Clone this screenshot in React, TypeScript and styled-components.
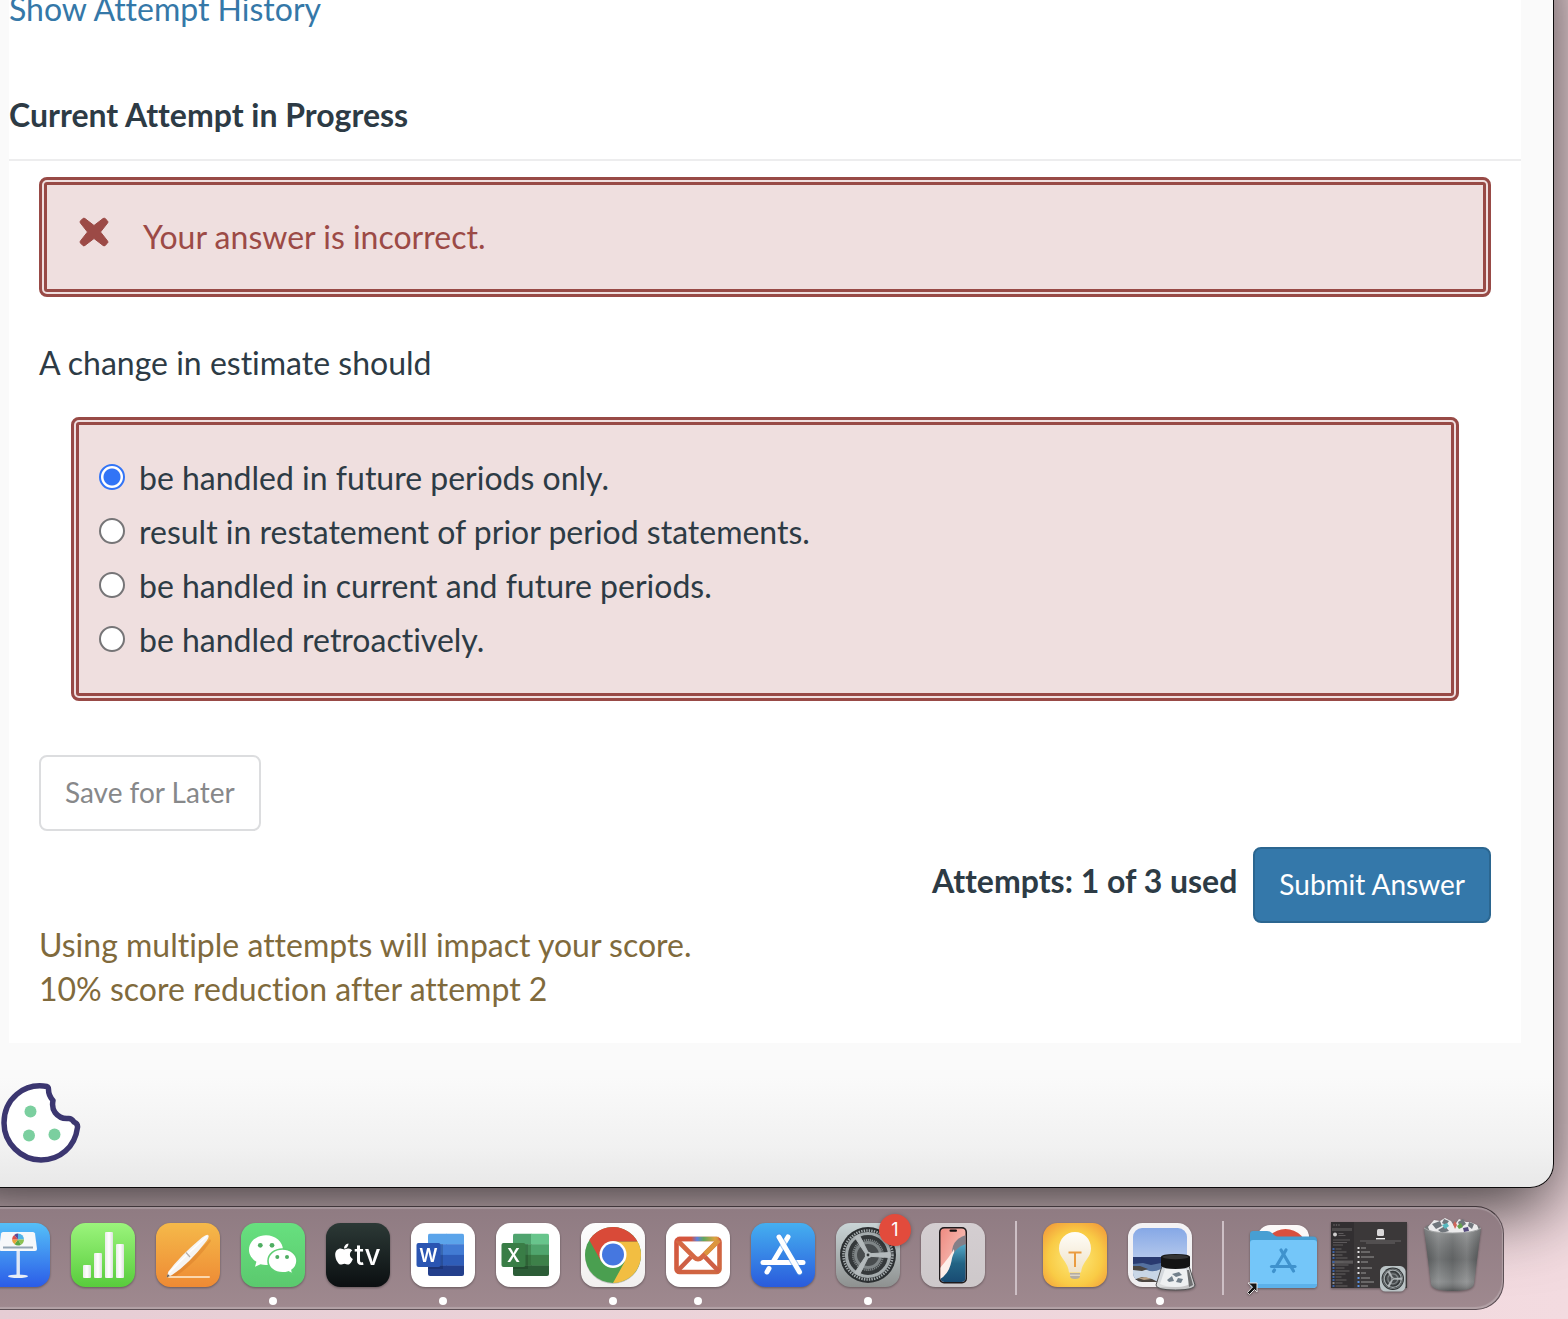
import React, { useState } from 'react';
import styled, { createGlobalStyle } from 'styled-components';
import { FaApple } from 'react-icons/fa';

const GlobalStyle = createGlobalStyle`
  *, *::before, *::after { box-sizing: border-box; }
  body {
    margin: 0;
    background: #f1d8de;
    color: #2d3b45;
    font-family: Lato, "Liberation Sans", sans-serif;
    font-size: 32px;
    line-height: 44px;
    font-variant-ligatures: none;
  }
  button, input { font: inherit; margin: 0; }
`;

/* ---------- Desktop and browser window ---------- */

const Desktop = styled.div`
  min-height: 100vh;
  overflow: hidden;
  display: flex;
  flex-direction: column;
  background: linear-gradient(to right, #e6cdd4, #f3dbe0);
`;

/* The window runs past the top and left screen edges, so its shadow is even there. */
const BrowserWindow = styled.div`
  margin: -73px 14px 0 -60px;
  padding: 60px 0 0 60px;
  overflow: hidden;
  border: solid #0c0a0b;
  border-width: 0 1px 1px 0;
  border-bottom-right-radius: 24px;
  background: linear-gradient(to top, #e8e8e8 0, #f1f1f1 40px, #fafafa 110px);
  box-shadow: 0 22px 72px rgba(0, 0, 0, 0.74);
`;

const Sheet = styled.main`
  margin: 0 32px 0 9px;
  padding-bottom: 32px;
  background: #fff;
`;

const HistoryLink = styled.a`
  display: inline-block;
  color: #3578a8;
  text-decoration: none;
`;

const Heading = styled.h1`
  margin: 62px 0 0;
  padding-bottom: 22px;
  border-bottom: 2px solid #ededee;
  font-size: 32px;
  line-height: 44px;
  font-weight: 700;
`;

const SheetBody = styled.div`
  padding: 16px 30px 0;
`;

const Alert = styled.div`
  display: flex;
  gap: 34px;
  padding: 30px 32px;
  border: 8px double #984a46;
  border-radius: 8px;
  background: #efdfdf;
  color: #9c4a46;
`;

const CrossIcon = styled.svg`
  width: 30px;
  height: 30px;
  margin-top: 2px;
  fill: currentColor;
`;

const Question = styled.form`
  display: flex;
  flex-direction: column;
`;

const Prompt = styled.p`
  margin: 44px 0 32px;
`;

const Options = styled.fieldset`
  display: flex;
  flex-direction: column;
  gap: 10px;
  min-width: 0;
  margin: 0 32px;
  padding: 31px 20px;
  border: 8px double #984a46;
  border-radius: 8px;
  background: #efdfdf;
`;

const Option = styled.label`
  display: flex;
  align-items: flex-start;
  gap: 14px;
`;

const Radio = styled.input`
  appearance: none;
  flex: none;
  width: 26px;
  height: 26px;
  border: 2px solid #767577;
  border-radius: 50%;
  background: #fff;

  ${Option} > & {
    margin-top: 8px;
  }

  &:checked {
    border-color: #3274f6;
    background: radial-gradient(circle, #3274f6 0 8px, #fff 9px);
  }
`;

const Button = styled.button<{ $primary?: boolean }>`
  padding: 15px 24px 17px;
  border: 2px solid ${(p) => (p.$primary ? '#2b6690' : '#dcdddf')};
  border-radius: 8px;
  background: ${(p) => (p.$primary ? '#3478aa' : '#fff')};
  color: ${(p) => (p.$primary ? '#fff' : '#87888a')};
  font-size: 28px;
  line-height: 40px;
`;

const SaveRow = styled.div`
  margin-top: 54px;
`;

const SubmitRow = styled.div`
  display: flex;
  justify-content: flex-end;
  align-items: flex-start;
  gap: 16px;
  margin-top: 16px;
`;

const Attempts = styled.strong`
  padding-top: 12px;
`;

const Notice = styled.p`
  margin: 0;
  color: #806a3c;
`;

const NoticeLine = styled.span`
  display: block;
`;

const CookieButton = styled.button`
  display: block;
  margin: 39px 0 23px;
  padding: 0;
  border: 0;
  background: none;
`;

const CookieIcon = styled.svg`
  display: block;
  width: 82px;
  height: 82px;
`;

/* ---------- Dock ---------- */

const DockBar = styled.nav`
  display: flex;
  gap: 21px;
  width: fit-content;
  margin: 18px 0 10px -31px;
  padding: 16px 19px 4px 16px;
  border: 1px solid #5d5056;
  border-top-color: #3f363a;
  border-radius: 28px;
  background: linear-gradient(#8f7b82, #9f898f);
  box-shadow: inset 0 2px 1px rgba(255, 255, 255, 0.2), inset -1px -2px 1px rgba(255, 255, 255, 0.22);
`;

const DockItem = styled.button<{ $running?: boolean }>`
  position: relative;
  display: flex;
  flex-direction: column;
  align-items: center;
  gap: 10px;
  width: 64px;
  padding: 0;
  border: 0;
  background: none;

  &::after {
    content: '';
    width: 8px;
    height: 8px;
    border-radius: 50%;
    background: ${(p) => (p.$running ? '#fff' : 'transparent')};
  }
`;

const DockSeparator = styled.span`
  width: 2px;
  height: 74px;
  margin: -2px 5px 0 9px;
  background: #cdbfc5;
`;

const Badge = styled.span`
  position: absolute;
  top: -9px;
  right: -11px;
  width: 32px;
  border-radius: 50%;
  background: #e24b3c;
  box-shadow: 0 1px 4px rgba(0, 0, 0, 0.3);
  color: #fff;
  font-family: Inter, sans-serif;
  font-size: 18px;
  line-height: 32px;
  text-align: center;
`;

const Art = styled.svg`
  display: block;
  width: 64px;
  height: 64px;
  overflow: visible;
  filter: drop-shadow(0 1px 1px rgba(0, 0, 0, 0.35));
`;

const LetterMark = styled.text`
  font-family: Inter, sans-serif;
  font-weight: 600;
  fill: #fff;
`;

const TvMark = styled(LetterMark)`
  font-weight: 500;
`;

function Tile({ id, from, to }: { id: string; from: string; to: string }) {
  return (
    <>
      <defs>
        <linearGradient id={id} x1="0" y1="0" x2="0" y2="1">
          <stop offset="0" stopColor={from} />
          <stop offset="1" stopColor={to} />
        </linearGradient>
      </defs>
      <rect width="64" height="64" rx="14.5" fill={`url(#${id})`} />
    </>
  );
}

function Keynote() {
  return (
    <Art viewBox="0 0 64 64">
      <Tile id="kn" from="#55c0f8" to="#2b5ce8" />
      <rect x="30.5" y="28" width="3.4" height="25" fill="#dfe8f5" />
      <ellipse cx="32" cy="53.3" rx="10" ry="1.8" fill="#e8edf6" />
      <path d="M17 9h30q1.500 0 2 1.500l2 15.500q0 2-2 2H15q-2 0-2-2l2-15.500q.4-1.500 2-1.500z" fill="#f6f8fa" />
      <rect x="17" y="23.500" width="30" height="2" fill="#93a5b5" />
      <path d="M32 16.500V10.500a6 6 0 0 1 6 6z" fill="#50b4e8" />
      <path d="M32 16.500h6a6 6 0 0 1-3 5.200z" fill="#8cc152" />
      <path d="M32 16.500l3 5.200a6 6 0 0 1-6.500-.4z" fill="#5ba843" />
      <path d="M32 16.500l-3.500 4.800a6 6 0 0 1-2.500-4.800z" fill="#e8a33c" />
      <path d="M32 16.500h-6a6 6 0 0 1 2.200-4.600z" fill="#dd4f48" />
      <path d="M32 16.500l-3.800-4.600a6 6 0 0 1 3.800-1.400z" fill="#5c4a98" />
    </Art>
  );
}

function Numbers() {
  return (
    <Art viewBox="0 0 64 64">
      <Tile id="nb" from="#9bf47c" to="#58cc3c" />
      <defs>
        <linearGradient id="nb-bar">
          <stop offset="0" stopColor="#e9ece9" />
          <stop offset=".5" stopColor="#fff" />
          <stop offset="1" stopColor="#dde2dd" />
        </linearGradient>
      </defs>
      <g fill="url(#nb-bar)">
        <rect x="12" y="42" width="8" height="13" rx="1" />
        <rect x="23" y="30" width="8" height="25" rx="1" />
        <rect x="34" y="9" width="8" height="46" rx="1" />
        <rect x="45" y="21" width="8" height="34" rx="1" />
      </g>
    </Art>
  );
}

function Pages() {
  return (
    <Art viewBox="0 0 64 64">
      <Tile id="pg" from="#f5b94a" to="#ee8a34" />
      <rect x="12" y="53" width="42" height="2" rx="1" fill="#fbd7ae" />
      <path d="M15 53Q34 38 54 16l1 2Q40 40 20 53z" fill="#c96a1e" opacity=".3" />
      <path d="M10.500 54.500l2-6Q24 33 46 14.500q4.500-3.200 6-2.500 1.800 1.500-1.500 6Q33 41 16 52z" fill="#f6f4f2" />
      <path d="M13 50Q30 32 51 13" fill="none" stroke="#fff" strokeWidth="1.500" />
      <path d="M30 29.500l4 4.500" stroke="#b3aeab" strokeWidth="1.200" />
      <path d="M10.500 54.500l1.200-3.400 2.200 2z" fill="#6b635c" />
    </Art>
  );
}

function WeChat() {
  return (
    <Art viewBox="0 0 64 64">
      <Tile id="wc" from="#67e07f" to="#5bc96e" />
      <path d="M25 12.200c9.500 0 17 6.500 17 14.800s-7.500 15-17 15q-2.800 0-5.500-.8L14 43.800l1.400-5C11 36 8 31.800 8 27c0-8.300 7.500-14.800 17-14.800z" fill="#fff" />
      <path d="M41.500 26c8 0 14.500 5.200 14.500 12 0 3.800-2 7-5 9.200l.9 4-4.500-2.300q-2.700 1-5.900 1C33.500 49.900 27 44.700 27 38s6.500-12 14.500-12z" fill="#fff" stroke="#5fd074" strokeWidth="1.600" />
      <g fill="#4fae62">
        <circle cx="19.300" cy="22.300" r="2.400" />
        <circle cx="31" cy="22.300" r="2.400" />
        <circle cx="36.300" cy="34" r="2" />
        <circle cx="46" cy="34" r="2" />
      </g>
    </Art>
  );
}

function AppleTv() {
  return (
    <Art viewBox="0 0 64 64">
      <Tile id="tv" from="#2c3936" to="#0b0f11" />
      <FaApple x="6" y="19" size={24} color="#fff" />
      <TvMark x="28.500" y="42" fontSize="28">tv</TvMark>
    </Art>
  );
}

function Office({ id, letter, label, cells }: { id: string; letter: string; label: string; cells: string[] }) {
  return (
    <Art viewBox="0 0 64 64">
      <Tile id={id} from="#fff" to="#fff" />
      <clipPath id={`${id}-c`}>
        <rect x="17" y="10.500" width="36" height="42.500" rx="2" />
      </clipPath>
      <g clipPath={`url(#${id}-c)`}>
        {cells.map((fill, i) => (
          <rect key={i} x={i % 2 ? 35 : 17} y={10.5 + Math.floor(i / 2) * 10.7} width="18.500" height="11" fill={fill} />
        ))}
        <rect x="17" y="21" width="15" height="25" fill="#000" opacity=".15" />
      </g>
      <rect x="5.500" y="20" width="24" height="24" rx="2" fill={label} />
      <LetterMark x="17.500" y="38.500" fontSize="18" textAnchor="middle">{letter}</LetterMark>
    </Art>
  );
}

function Chrome() {
  return (
    <Art viewBox="0 0 64 64">
      <Tile id="cr" from="#fdfdfd" to="#f1efee" />
      <circle cx="32" cy="33" r="28" fill="#000" opacity=".18" />
      <circle cx="32" cy="32" r="28" fill="#4a9f50" />
      <path d="M32 18.500h24.500A28 28 0 0 1 32 60L43.700 38.800z" fill="#f2be42" />
      <path d="M8.300 17.100A28 28 0 0 1 56.500 18.500H32L20.300 38.800z" fill="#d94a38" />
      <circle cx="32" cy="31.500" r="13.500" fill="#fff" />
      <circle cx="32" cy="31.500" r="11" fill="#4577e0" />
    </Art>
  );
}

function Mail() {
  return (
    <Art viewBox="0 0 64 64">
      <Tile id="ml" from="#fff" to="#fff" />
      <defs>
        <linearGradient id="ml-s" gradientUnits="userSpaceOnUse" x1="8" y1="0" x2="56" y2="0">
          <stop offset="0" stopColor="#d4553e" />
          <stop offset=".36" stopColor="#d4553e" />
          <stop offset=".48" stopColor="#5d7fe0" />
          <stop offset=".62" stopColor="#61a85c" />
          <stop offset=".85" stopColor="#dba33f" />
          <stop offset="1" stopColor="#d9743d" />
        </linearGradient>
        <linearGradient id="ml-b" x1="0" y1="0" x2="1" y2="1">
          <stop offset="0" stopColor="#d4553e" />
          <stop offset="1" stopColor="#cf6a42" />
        </linearGradient>
      </defs>
      <g fill="none" strokeWidth="4.600" strokeLinejoin="round">
        <rect x="10.500" y="16" width="43" height="33" rx="3" stroke="url(#ml-b)" />
        <path d="M11 17l17.500 17.500q3.500 3.500 7 0L53 17" stroke="#d56844" />
        <path d="M11 48.500L25 34M53 48.500L39 34" stroke="#ce5f45" />
        <path d="M39 31L53 17" stroke="#dc963f" />
        <path d="M11.500 16H52.500" stroke="url(#ml-s)" />
      </g>
    </Art>
  );
}

function AppStore() {
  return (
    <Art viewBox="0 0 64 64">
      <Tile id="as" from="#45aff0" to="#2a5bdc" />
      <g stroke="#fff" strokeWidth="5" strokeLinecap="round">
        <path d="M37 14L22 39" />
        <path d="M12 39.500H52" />
        <path d="M18 45.500L16 49" />
        <path d="M28 14L48.500 49" stroke="#3f8be6" strokeWidth="7" opacity=".5" />
        <path d="M28 14L48.500 49" />
      </g>
    </Art>
  );
}

function GearFace() {
  const spokes = [0, 120, 240];
  return (
    <g>
      <circle cx="32" cy="32" r="28" fill="#2b2f31" />
      <circle cx="32" cy="32" r="24.500" fill="none" stroke="#a4abad" strokeWidth="2.600" strokeDasharray="1.400 1.166" />
      <circle cx="32" cy="32" r="21.500" fill="#34383a" stroke="#a4abad" strokeWidth="3.200" />
      <circle cx="32" cy="32" r="12.500" fill="#484c4e" stroke="#7f8587" strokeWidth="3" />
      <circle cx="32" cy="32" r="15" fill="none" stroke="#7f8587" strokeWidth="2" strokeDasharray="1.200 .8" />
      {spokes.map((a) => (
        <path key={a} d="M32 30.800L54 29.500V34.500L32 33.200z" fill="#b4babc" stroke="#b4babc" transform={`rotate(${a} 32 32)`} />
      ))}
      <circle cx="32" cy="32" r="3.200" fill="#b4babc" />
      <circle cx="32" cy="32" r="1.400" fill="#34383a" />
    </g>
  );
}

function Settings() {
  return (
    <Art viewBox="0 0 64 64">
      <Tile id="st" from="#c9d4d6" to="#8e9190" />
      <GearFace />
    </Art>
  );
}

function PhoneMirror() {
  return (
    <Art viewBox="0 0 64 64">
      <Tile id="ph" from="#d4ced1" to="#cdc8ca" />
      <defs>
        <linearGradient id="ph-r" x1="0" y1="0" x2="1" y2="1">
          <stop offset="0" stopColor="#ee8a80" />
          <stop offset="1" stopColor="#fbd6cf" />
        </linearGradient>
        <linearGradient id="ph-b" x1="0" y1="0" x2="0" y2="1">
          <stop offset="0" stopColor="#56aac8" />
          <stop offset=".5" stopColor="#226384" />
          <stop offset="1" stopColor="#184a72" />
        </linearGradient>
        <clipPath id="ph-c">
          <rect x="19.500" y="5.500" width="25" height="53.500" rx="4" />
        </clipPath>
      </defs>
      <rect x="18" y="4" width="28" height="56.500" rx="5" fill="#1e1a1c" />
      <g clipPath="url(#ph-c)">
        <rect x="19" y="5" width="26" height="55" fill="url(#ph-r)" />
        <path d="M45 12Q29 17 31.500 33L45 26z" fill="#847f88" />
        <path d="M19 56V45Q30 32 33 26L34 42L24 60z" fill="#fdeeea" />
        <path d="M45 21Q32 25 30.500 38 28 51 19 56V60H45z" fill="url(#ph-b)" />
      </g>
      <rect x="28.500" y="6.500" width="7.500" height="2.300" rx="1.100" fill="#151213" />
    </Art>
  );
}

function Tips() {
  return (
    <Art viewBox="0 0 64 64">
      <defs>
        <radialGradient id="tp" cx=".5" cy=".55" r=".7">
          <stop offset="0" stopColor="#fdea7a" />
          <stop offset=".6" stopColor="#f9cb45" />
          <stop offset="1" stopColor="#f0963a" />
        </radialGradient>
        <linearGradient id="tp-b" x1="0" y1="0" x2="0" y2="1">
          <stop offset="0" stopColor="#fffdf8" />
          <stop offset="1" stopColor="#efe2c8" />
        </linearGradient>
      </defs>
      <rect width="64" height="64" rx="14.500" fill="url(#tp)" />
      <path d="M26 49.500Q25.500 43 20 36 16 31 16 25.500C16 16 23 9 32 9S48 16 48 25.500Q48 31 44 36 38.500 43 38 49.500z" fill="url(#tp-b)" />
      <path d="M27 50h10v3q0 3-5 3t-5-3z" fill="#b5ada0" />
      <path d="M27 52.200h10" stroke="#efe8da" />
      <path d="M25.500 29.500H38.500M32 29.500V44" stroke="#ea9c40" strokeWidth="2" fill="none" />
    </Art>
  );
}

function PreviewApp() {
  return (
    <Art viewBox="0 0 64 64">
      <Tile id="pv" from="#f4f3f5" to="#efedef" />
      <defs>
        <clipPath id="pv-c">
          <rect x="5" y="5" width="54" height="54" rx="9" />
        </clipPath>
        <linearGradient id="pv-s" x1="0" y1="0" x2="0" y2="1">
          <stop offset="0" stopColor="#86a8e6" />
          <stop offset="1" stopColor="#b3c7ec" />
        </linearGradient>
      </defs>
      <g clipPath="url(#pv-c)">
        <rect x="5" y="5" width="54" height="30" fill="url(#pv-s)" />
        <rect x="5" y="34" width="54" height="12" fill="#293a70" />
        <path d="M5 41l10-1 8 2 10-2 12 1 14-1V60H5z" fill="#55719f" />
        <path d="M5 47q8-3 14 0t14-1 26 0v14H5z" fill="#c9d6e6" />
        <path d="M5 43l7 0 8 3-6 2-9-1zM5 60v-3l9-3 10 2 8 4z" fill="#4c4641" />
        <path d="M10 55l8-1 5 2-7 1z" fill="#b89f84" />
      </g>
      <path d="M34 43L28 62q0 5 19.500 5T67 62L61 43z" fill="#d7d9da" fillOpacity=".85" stroke="#4e4f50" strokeWidth="1" />
      <path d="M37 46L32 61q6 3 15.500 3T62 61L58 46z" fill="#eef0f1" />
      <path d="M44 51l7-2 3 3-6 2zM39 57l5-4 2 5-5 1zM50 55l5 1-2 4-5-1z" fill="#73808b" />
      <path d="M61 47l4 15-4 2-2-17z" fill="#6d6f70" />
      <path d="M33 34q0-3 14.500-3T62 34v9q-3 3-14.500 3T33 43z" fill="#141414" />
      <ellipse cx="47.500" cy="34" rx="13" ry="2.200" fill="#343434" />
    </Art>
  );
}

function AppsFolder() {
  return (
    <Art viewBox="0 0 64 64">
      <defs>
        <clipPath id="fd-c">
          <rect x="8" y="2" width="51" height="30" rx="12" />
        </clipPath>
      </defs>
      <rect x="8" y="2" width="51" height="30" rx="12" fill="#fbf8f8" />
      <circle cx="35.500" cy="28" r="22" fill="#d9503f" clipPath="url(#fd-c)" />
      <path d="M0 11q0-3 3-3h14q3 0 5 2l2 2q2 1.500 4 1.500h35q4 0 4 4V30H0z" fill="#479fd3" />
      <path d="M0 20q0-3 3-3h61q3 0 3 3v41q0 4-4 4H4q-4 0-4-4z" fill="#74c6f9" />
      <path d="M0 61h67q0 4-4 4H4q-4 0-4-4z" fill="#5cb1ea" />
      <g stroke="#3f92cd" strokeWidth="3.200" strokeLinecap="round">
        <path d="M36 27L26.500 43" />
        <path d="M21.500 43.500H45" />
        <path d="M24.500 47L23.500 48.500" />
        <path d="M31 27L43.500 48" />
      </g>
      <path d="M-2 60H7v9l-2.500-2.500L-.5 71.500-2.500 69.500 2.500 64z" fill="#141414" stroke="#e8e4e5" strokeWidth="1" />
    </Art>
  );
}

function WindowThumb() {
  const sideRows = [26, 29, 32, 35, 39, 42, 45, 48, 51, 54, 57, 60, 63];
  const mainRows = [25, 29, 34, 39, 45, 50, 55, 59, 63];
  return (
    <Art viewBox="0 0 64 64">
      <rect x="-4" y="-1" width="76" height="66" fill="#3b3839" />
      <rect x="-4" y="-1" width="23" height="66" fill="#322f31" />
      <g fill="#6c696a">
        <circle cx="-1" cy="2" r=".8" />
        <circle cx="1.500" cy="2" r=".8" />
        <circle cx="4" cy="2" r=".8" />
      </g>
      <rect x="-3" y="5" width="20" height="3" fill="#4d4a4b" />
      <circle cx="0" cy="11.500" r="2" fill="#cfcdcd" />
      <path d="M3.500 10.500h5M3.500 12.500h7M-2 17h17M-2 19.500h14M-2 22h10" stroke="#686566" strokeWidth=".8" />
      <rect x="-3" y="37.500" width="21" height="3.200" fill="#5b5859" />
      {sideRows.map((y, i) => (
        <g key={y}>
          <rect x="-2.500" y={y - 1} width="2" height="2" fill={i % 3 === 2 ? '#8a8788' : '#3a62a8'} />
          <rect x="0.500" y={y - 0.5} width={6 + ((i * 5) % 9)} height="1" fill="#656263" />
        </g>
      ))}
      <rect x="42" y="6" width="7" height="7" rx="1.500" fill="#d9d7d8" />
      <rect x="41" y="15" width="9" height="1.400" fill="#efefef" />
      <path d="M25 18h41M31 20h29" stroke="#777475" strokeWidth=".8" />
      {mainRows.map((y, i) => (
        <g key={y}>
          <rect x="22.500" y={y - 1} width="2" height="2" fill={i > 5 ? '#5a8fe0' : '#e4e2e3'} />
          <rect x="26" y={y - 0.5} width={5 + ((i * 4) % 10)} height="1" fill="#979596" />
        </g>
      ))}
      <g transform="translate(45 43) scale(.4)">
        <rect width="64" height="64" rx="14" fill="#bac3c5" />
        <GearFace />
      </g>
    </Art>
  );
}

function Trash() {
  return (
    <Art viewBox="0 0 64 64">
      <defs>
        <linearGradient id="tr">
          <stop offset="0" stopColor="#5b5e5f" />
          <stop offset=".25" stopColor="#828586" />
          <stop offset=".5" stopColor="#6d7071" />
          <stop offset=".75" stopColor="#87898a" />
          <stop offset="1" stopColor="#56595a" />
        </linearGradient>
        <linearGradient id="tr-s" x1="0" y1="0" x2="0" y2="1">
          <stop offset="0" stopColor="#fff" stopOpacity=".2" />
          <stop offset=".5" stopColor="#000" stopOpacity=".12" />
          <stop offset=".85" stopColor="#fff" stopOpacity=".12" />
          <stop offset="1" stopColor="#000" stopOpacity=".25" />
        </linearGradient>
      </defs>
      <path d="M5 5q0-5 27.500-5T60 5v6H5z" fill="#77797b" />
      <path d="M8 4l6-7 6 1 5-3 6 3 3 5 5-7 7 3 4 0 7 3 2 5-4 6H12z" fill="#ecebec" />
      <path d="M12 1l8-3 2 5-6 3zM24-4l5 2-3 4-4-2zM38-1l5-3 3 5-6 4zM49-1l5 2-2 5-4-3zM18 7l7-4 4 5-7 2z" fill="#70767c" />
      <path d="M22 2l5-2 2 3-4 3z" fill="#58b9bf" />
      <path d="M37 3l4-3 2 4-4 2z" fill="#63a04c" />
      <path d="M33 1l2-3 2 4-2 4z" fill="#d0655a" />
      <path d="M43 5l5-1 1 4-5 1z" fill="#544a7d" />
      <path d="M4 5q6 5 28.500 5T61 5L54 61q-1 7-21.500 7T11 61z" fill="url(#tr)" />
      <path d="M4 5q6 5 28.500 5T61 5L54 61q-1 7-21.500 7T11 61z" fill="url(#tr-s)" />
      <path d="M4 5q6 5 28.500 5T61 5" fill="none" stroke="#a2a4a5" strokeWidth="1" />
    </Art>
  );
}

const wordCells = ['#5ba4ea', '#5ba4ea', '#427bd3', '#427bd3', '#2f5db8', '#2f5db8', '#233f8c', '#233f8c'];
const excelCells = ['#4fa36e', '#68c58c', '#438b55', '#50a56d', '#36733f', '#3d8049', '#2c5d37', '#2c5d37'];

type DockEntry = { name: string; art: React.ReactNode; running?: boolean; badge?: string } | null;

/* null marks a divider */
const dockEntries: DockEntry[] = [
  { name: 'Keynote', art: <Keynote /> },
  { name: 'Numbers', art: <Numbers /> },
  { name: 'Pages', art: <Pages /> },
  { name: 'WeChat', art: <WeChat />, running: true },
  { name: 'Apple TV', art: <AppleTv /> },
  { name: 'Word', art: <Office id="wd" letter="W" label="#2a55b2" cells={wordCells} />, running: true },
  { name: 'Excel', art: <Office id="xl" letter="X" label="#397d46" cells={excelCells} /> },
  { name: 'Chrome', art: <Chrome />, running: true },
  { name: 'Mail', art: <Mail />, running: true },
  { name: 'App Store', art: <AppStore /> },
  { name: 'System Settings', art: <Settings />, running: true, badge: '1' },
  { name: 'iPhone Mirroring', art: <PhoneMirror /> },
  null,
  { name: 'Tips', art: <Tips /> },
  { name: 'Preview', art: <PreviewApp />, running: true },
  null,
  { name: 'Applications', art: <AppsFolder /> },
  { name: 'Minimized settings window', art: <WindowThumb /> },
  { name: 'Trash', art: <Trash /> },
];

const answers = [
  'be handled in future periods only.',
  'result in restatement of prior period statements.',
  'be handled in current and future periods.',
  'be handled retroactively.',
];

export default function App() {
  const [selected, setSelected] = useState(0);

  return (
    <Desktop>
      <GlobalStyle />
      <BrowserWindow>
        <Sheet>
          <HistoryLink href="#history">Show Attempt History</HistoryLink>
          <Heading>Current Attempt in Progress</Heading>
          <SheetBody>
            <Alert role="alert">
              <CrossIcon viewBox="0 0 30 30" aria-hidden="true">
                <path d="M6 1.600L15 8.500l9-6.900q1.200-.9 2.200 0l2.300 2.300q1 1.200 0 2.200L21.500 15l7 8.900q1 1.200 0 2.200l-2.300 2.300q-1.200 1-2.200 0L15 21.500l-9 6.900q-1.200 1-2.200 0l-2.300-2.300q-1-1.200 0-2.200L8.500 15l-7-8.900q-1-1.200 0-2.200l2.300-2.300q1.200-.9 2.200 0z" stroke="currentColor" strokeWidth="1" />
              </CrossIcon>
              <span>Your answer is incorrect.</span>
            </Alert>
            <Question onSubmit={(e) => e.preventDefault()}>
              <Prompt id="prompt">A change in estimate should</Prompt>
              <Options aria-labelledby="prompt">
                {answers.map((answer, i) => (
                  <Option key={answer}>
                    <Radio type="radio" name="answer" checked={selected === i} onChange={() => setSelected(i)} />
                    <span>{answer}</span>
                  </Option>
                ))}
              </Options>
              <SaveRow>
                <Button type="button">Save for Later</Button>
              </SaveRow>
              <SubmitRow>
                <Attempts>Attempts: 1 of 3 used</Attempts>
                <Button type="submit" $primary>Submit Answer</Button>
              </SubmitRow>
            </Question>
            <Notice>
              <NoticeLine>Using multiple attempts will impact your score.</NoticeLine>
              <NoticeLine>10% score reduction after attempt 2</NoticeLine>
            </Notice>
          </SheetBody>
        </Sheet>
        <CookieButton type="button" aria-label="Cookie preferences">
          <CookieIcon viewBox="0 0 82 82">
            <path
              d="M47 4.500C24 .5 4 17 4 41c0 20 17 37 37 37 19 0 34-13 36.500-32.500q.5-4-3.500-5.500-2.500-4-6-3.500-8 .5-13-6-3.500-5-2-12-4.500-5-4.500-11 0-2.500-1.500-3z"
              fill="#fff"
              stroke="#3b3670"
              strokeWidth="5.500"
              strokeLinejoin="round"
            />
            <g fill="#7bcf9f">
              <circle cx="30.500" cy="29.500" r="6" />
              <circle cx="29" cy="53.500" r="6" />
              <circle cx="54.500" cy="52.500" r="6" />
            </g>
          </CookieIcon>
        </CookieButton>
      </BrowserWindow>
      <DockBar aria-label="Dock">
        {dockEntries.map((entry, i) =>
          entry ? (
            <DockItem key={entry.name} type="button" aria-label={entry.name} $running={entry.running}>
              {entry.art}
              {entry.badge && <Badge>{entry.badge}</Badge>}
            </DockItem>
          ) : (
            <DockSeparator key={`divider-${i}`} />
          ),
        )}
      </DockBar>
    </Desktop>
  );
}
